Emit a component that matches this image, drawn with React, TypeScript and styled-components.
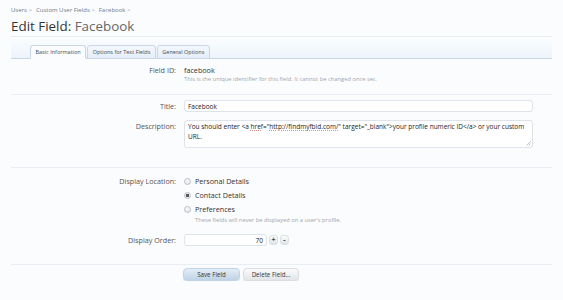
import React, { FC } from "react";
import styled, { createGlobalStyle } from "styled-components";

const GlobalStyle = createGlobalStyle`
  html, body {
    margin: 0;
    padding: 0;
    background: #fbfcfe;
  }
  body {
    font-family: "Open Sans", "Noto Sans", sans-serif;
    color: #333;
  }
`;

const Page = styled.div`
  width: 541px;
  padding: 0 0 0 11px;
`;

const Breadcrumb = styled.div`
  display: flex;
  gap: 4px;
  padding-top: 5px;
  height: 10px;
  font-size: 6px;
  line-height: 10px;
  color: #6b7b8c;
`;

const Crumb = styled.span`
  &::after {
    content: " >";
    color: #8a97a4;
  }
`;

const Title = styled.h1`
  margin: 0;
  padding-top: 1px;
  height: 20px;
  font-size: 13.4px;
  line-height: 20px;
  font-weight: normal;
  color: #333;
  border-bottom: 1px solid #e6ecf2;
`;

const TitleSub = styled.span`
  color: #666;
`;

const TabBar = styled.div`
  display: flex;
  align-items: flex-end;
  height: 21px;
  padding-left: 19px;
  background: linear-gradient(to bottom, #fbfdff 0%, #edf4fb 100%);
  border-bottom: 1px solid #c9d7e4;
`;

const Tab = styled.div<{ active?: boolean }>`
  height: 12px;
  padding: 0 4.5px;
  margin-right: 1px;
  margin-bottom: -1px;
  font-size: 5.5px;
  line-height: 12px;
  color: #3c4e60;
  border: 1px solid #c9d7e4;
  border-bottom: 1px solid ${(p) => (p.active ? "#fbfcfe" : "#c9d7e4")};
  border-radius: 3px 3px 0 0;
  background: ${(p) =>
    p.active ? "#fbfcfe" : "linear-gradient(to bottom, #f4f8fc, #e4eef8)"};
`;

const Section = styled.div<{ top: number; bottom: number }>`
  padding: ${(p) => p.top}px 0 ${(p) => p.bottom}px;
  border-bottom: 1px solid #e8eef4;
`;

const Row = styled.div<{ gap?: number }>`
  display: grid;
  grid-template-columns: 173px 1fr;
  margin-bottom: ${(p) => p.gap ?? 0}px;
`;

const Label = styled.div<{ pad?: number }>`
  padding-right: 8px;
  padding-top: ${(p) => p.pad ?? 0}px;
  text-align: right;
  font-size: 7.2px;
  line-height: 10px;
  color: #555;
`;

const Value = styled.div`
  font-size: 7.2px;
  line-height: 10px;
  color: #333;
`;

const Explain = styled.div<{ indent?: number }>`
  padding-left: ${(p) => p.indent ?? 0}px;
  font-size: 5.8px;
  line-height: 9px;
  color: #a0a6ad;
`;

const TextBox = styled.div<{ width: number; height: number; align?: string }>`
  box-sizing: border-box;
  width: ${(p) => p.width}px;
  height: ${(p) => p.height}px;
  padding: 1px 3px;
  font-size: 6.5px;
  line-height: 10px;
  color: #222;
  text-align: ${(p) => p.align ?? "left"};
  background: #fff;
  border: 1px solid #dde3e9;
  border-radius: 3px;
  position: relative;
`;

const Grip = styled.svg`
  position: absolute;
  right: 1px;
  bottom: 1px;
`;

const Wavy = styled.span`
  text-decoration: underline dotted #e48d8d;
`;

const RadioList = styled.div`
  display: flex;
  flex-direction: column;
  margin-top: -1px;
`;

const RadioRow = styled.label`
  display: flex;
  align-items: center;
  gap: 4px;
  height: 14px;
  font-size: 7.2px;
  color: #333;
`;

const RadioDot = styled.span<{ checked?: boolean }>`
  box-sizing: border-box;
  width: 7px;
  height: 7px;
  border-radius: 50%;
  border: 1px solid #b9bfc6;
  background: ${(p) =>
    p.checked
      ? "radial-gradient(circle, #555 0 1.4px, #eceff2 1.8px)"
      : "linear-gradient(to bottom, #fafafa, #e4e7ea)"};
`;

const Spinner = styled.div`
  display: flex;
  align-items: center;
  gap: 2px;
`;

const SpinButton = styled.button`
  box-sizing: border-box;
  width: 9px;
  height: 10px;
  padding: 0;
  font-family: inherit;
  font-size: 7px;
  font-weight: bold;
  line-height: 8px;
  color: #444;
  border: 1px solid #dcdfe3;
  border-radius: 3px;
  background: linear-gradient(to bottom, #fafbfc, #dfe3e7);
`;

const Actions = styled.div`
  display: flex;
  gap: 3px;
  padding: 3px 0 0 172px;
`;

const Button = styled.button<{ primary?: boolean }>`
  box-sizing: border-box;
  height: 13px;
  padding: 0;
  font-family: inherit;
  font-size: 6.2px;
  color: #333;
  border: 1px solid ${(p) => (p.primary ? "#c2d3e3" : "#dadde1")};
  border-radius: 4px;
  background: ${(p) =>
    p.primary
      ? "linear-gradient(to bottom, #e3edf6, #bfd3e6)"
      : "linear-gradient(to bottom, #fbfbfc, #e2e4e8)"};
  box-shadow: 0 1px 1px rgba(0, 0, 0, 0.12);
`;

const Radio: FC<{ label: string; checked?: boolean }> = ({ label, checked }) => (
  <RadioRow>
    <RadioDot checked={checked} />
    {label}
  </RadioRow>
);

export default function App() {
  return (
    <Page>
      <GlobalStyle />
      <Breadcrumb>
        <Crumb>Users</Crumb>
        <Crumb>Custom User Fields</Crumb>
        <Crumb>Facebook</Crumb>
      </Breadcrumb>
      <Title>
        Edit Field: <TitleSub>Facebook</TitleSub>
      </Title>
      <TabBar>
        <Tab active>Basic Information</Tab>
        <Tab>Options for Text Fields</Tab>
        <Tab>General Options</Tab>
      </TabBar>

      <Section top={6} bottom={10}>
        <Row>
          <Label>Field ID:</Label>
          <Value>
            facebook
            <Explain>This is the unique identifier for this field. It cannot be changed once set.</Explain>
          </Value>
        </Row>
      </Section>

      <Section top={5} bottom={19}>
        <Row gap={8}>
          <Label pad={1}>Title:</Label>
          <TextBox width={349} height={12}>
            Facebook
          </TextBox>
        </Row>
        <Row>
          <Label pad={1}>Description:</Label>
          <TextBox width={349} height={28}>
            You should enter &lt;a <Wavy>href</Wavy>="<Wavy>http://findmyfbid.com/</Wavy>" target="_blank"&gt;your
            profile numeric ID&lt;/a&gt; or your custom URL.
            <Grip width="5" height="5" viewBox="0 0 5 5">
              <path d="M4.5 0.5 L0.5 4.5 M4.5 2.5 L2.5 4.5" stroke="#999" strokeWidth="0.6" />
            </Grip>
          </TextBox>
        </Row>
      </Section>

      <Section top={7} bottom={18}>
        <Row gap={9}>
          <Label pad={1}>Display Location:</Label>
          <RadioList>
            <Radio label="Personal Details" />
            <Radio label="Contact Details" checked />
            <Radio label="Preferences" />
            <Explain indent={11}>These fields will never be displayed on a user's profile.</Explain>
          </RadioList>
        </Row>
        <Row>
          <Label pad={1}>Display Order:</Label>
          <Spinner>
            <TextBox width={83} height={12} align="right">
              70
            </TextBox>
            <SpinButton>+</SpinButton>
            <SpinButton>-</SpinButton>
          </Spinner>
        </Row>
      </Section>

      <Actions>
        <Button primary style={{ width: 57 }}>
          Save Field
        </Button>
        <Button style={{ width: 56 }}>Delete Field...</Button>
      </Actions>
    </Page>
  );
}
